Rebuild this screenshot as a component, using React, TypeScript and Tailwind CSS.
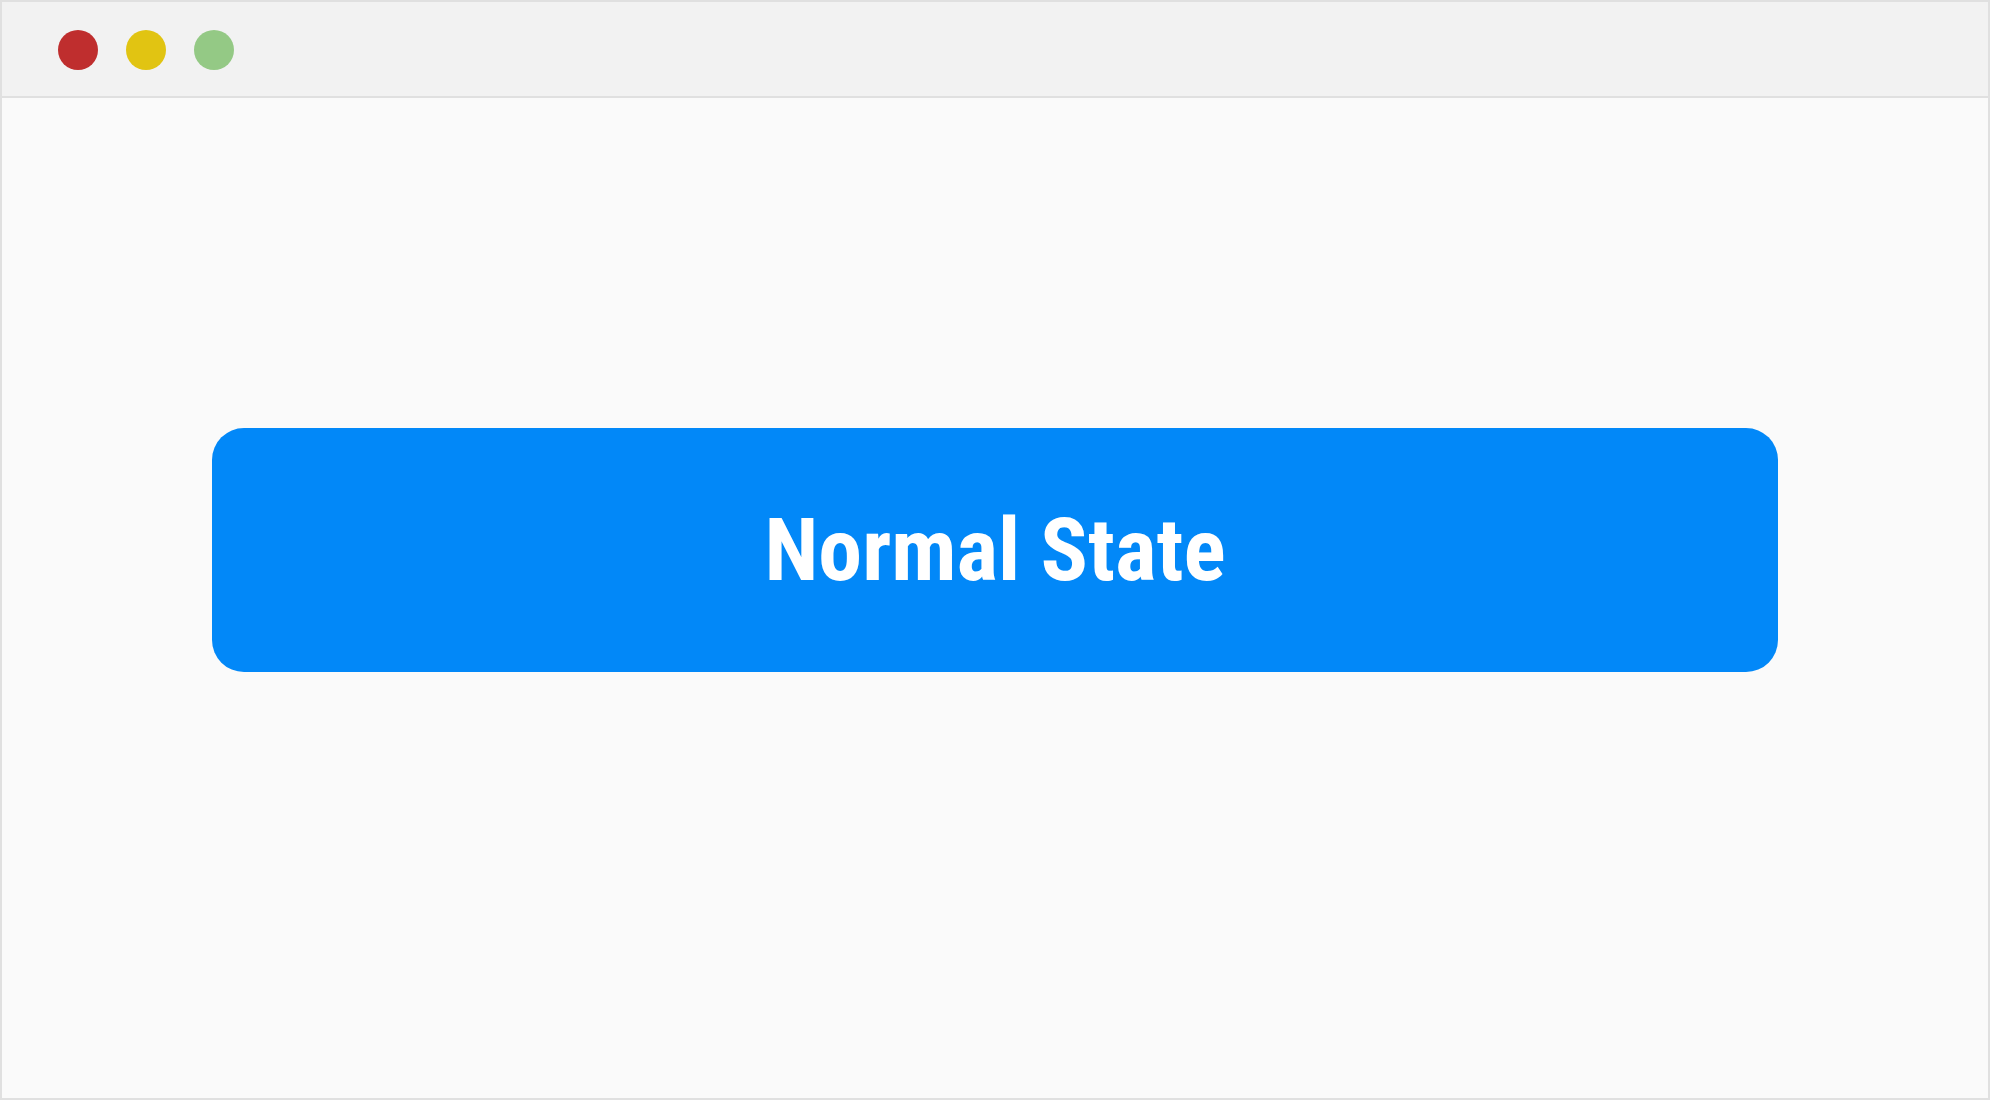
export default function App() {
  return (
    <div className="h-[1100px] w-[1990px] border-2 border-[#e0e0e0] bg-[#fafafa] flex flex-col overflow-hidden">
      {/* Window title bar */}
      <div className="h-[96px] shrink-0 bg-[#f2f2f2] border-b-2 border-[#e0e0e0] flex items-center pl-[56px] gap-[28px] pt-[2px]">
        <span className="w-[40px] h-[40px] rounded-full bg-[#bf2e2e]" />
        <span className="w-[40px] h-[40px] rounded-full bg-[#e1c412]" />
        <span className="w-[40px] h-[40px] rounded-full bg-[#94c985]" />
      </div>

      {/* Content */}
      <div className="flex-1 flex items-center justify-center pb-[96px]">
        <button
          className="w-[1566px] h-[244px] rounded-[32px] bg-[#0288f8] text-white font-bold text-[88px] leading-none flex items-center justify-center [font-stretch:75%]"
          style={{ fontFamily: 'Roboto, "Liberation Sans", sans-serif' }}
        >
          Normal State
        </button>
      </div>
    </div>
  );
}
